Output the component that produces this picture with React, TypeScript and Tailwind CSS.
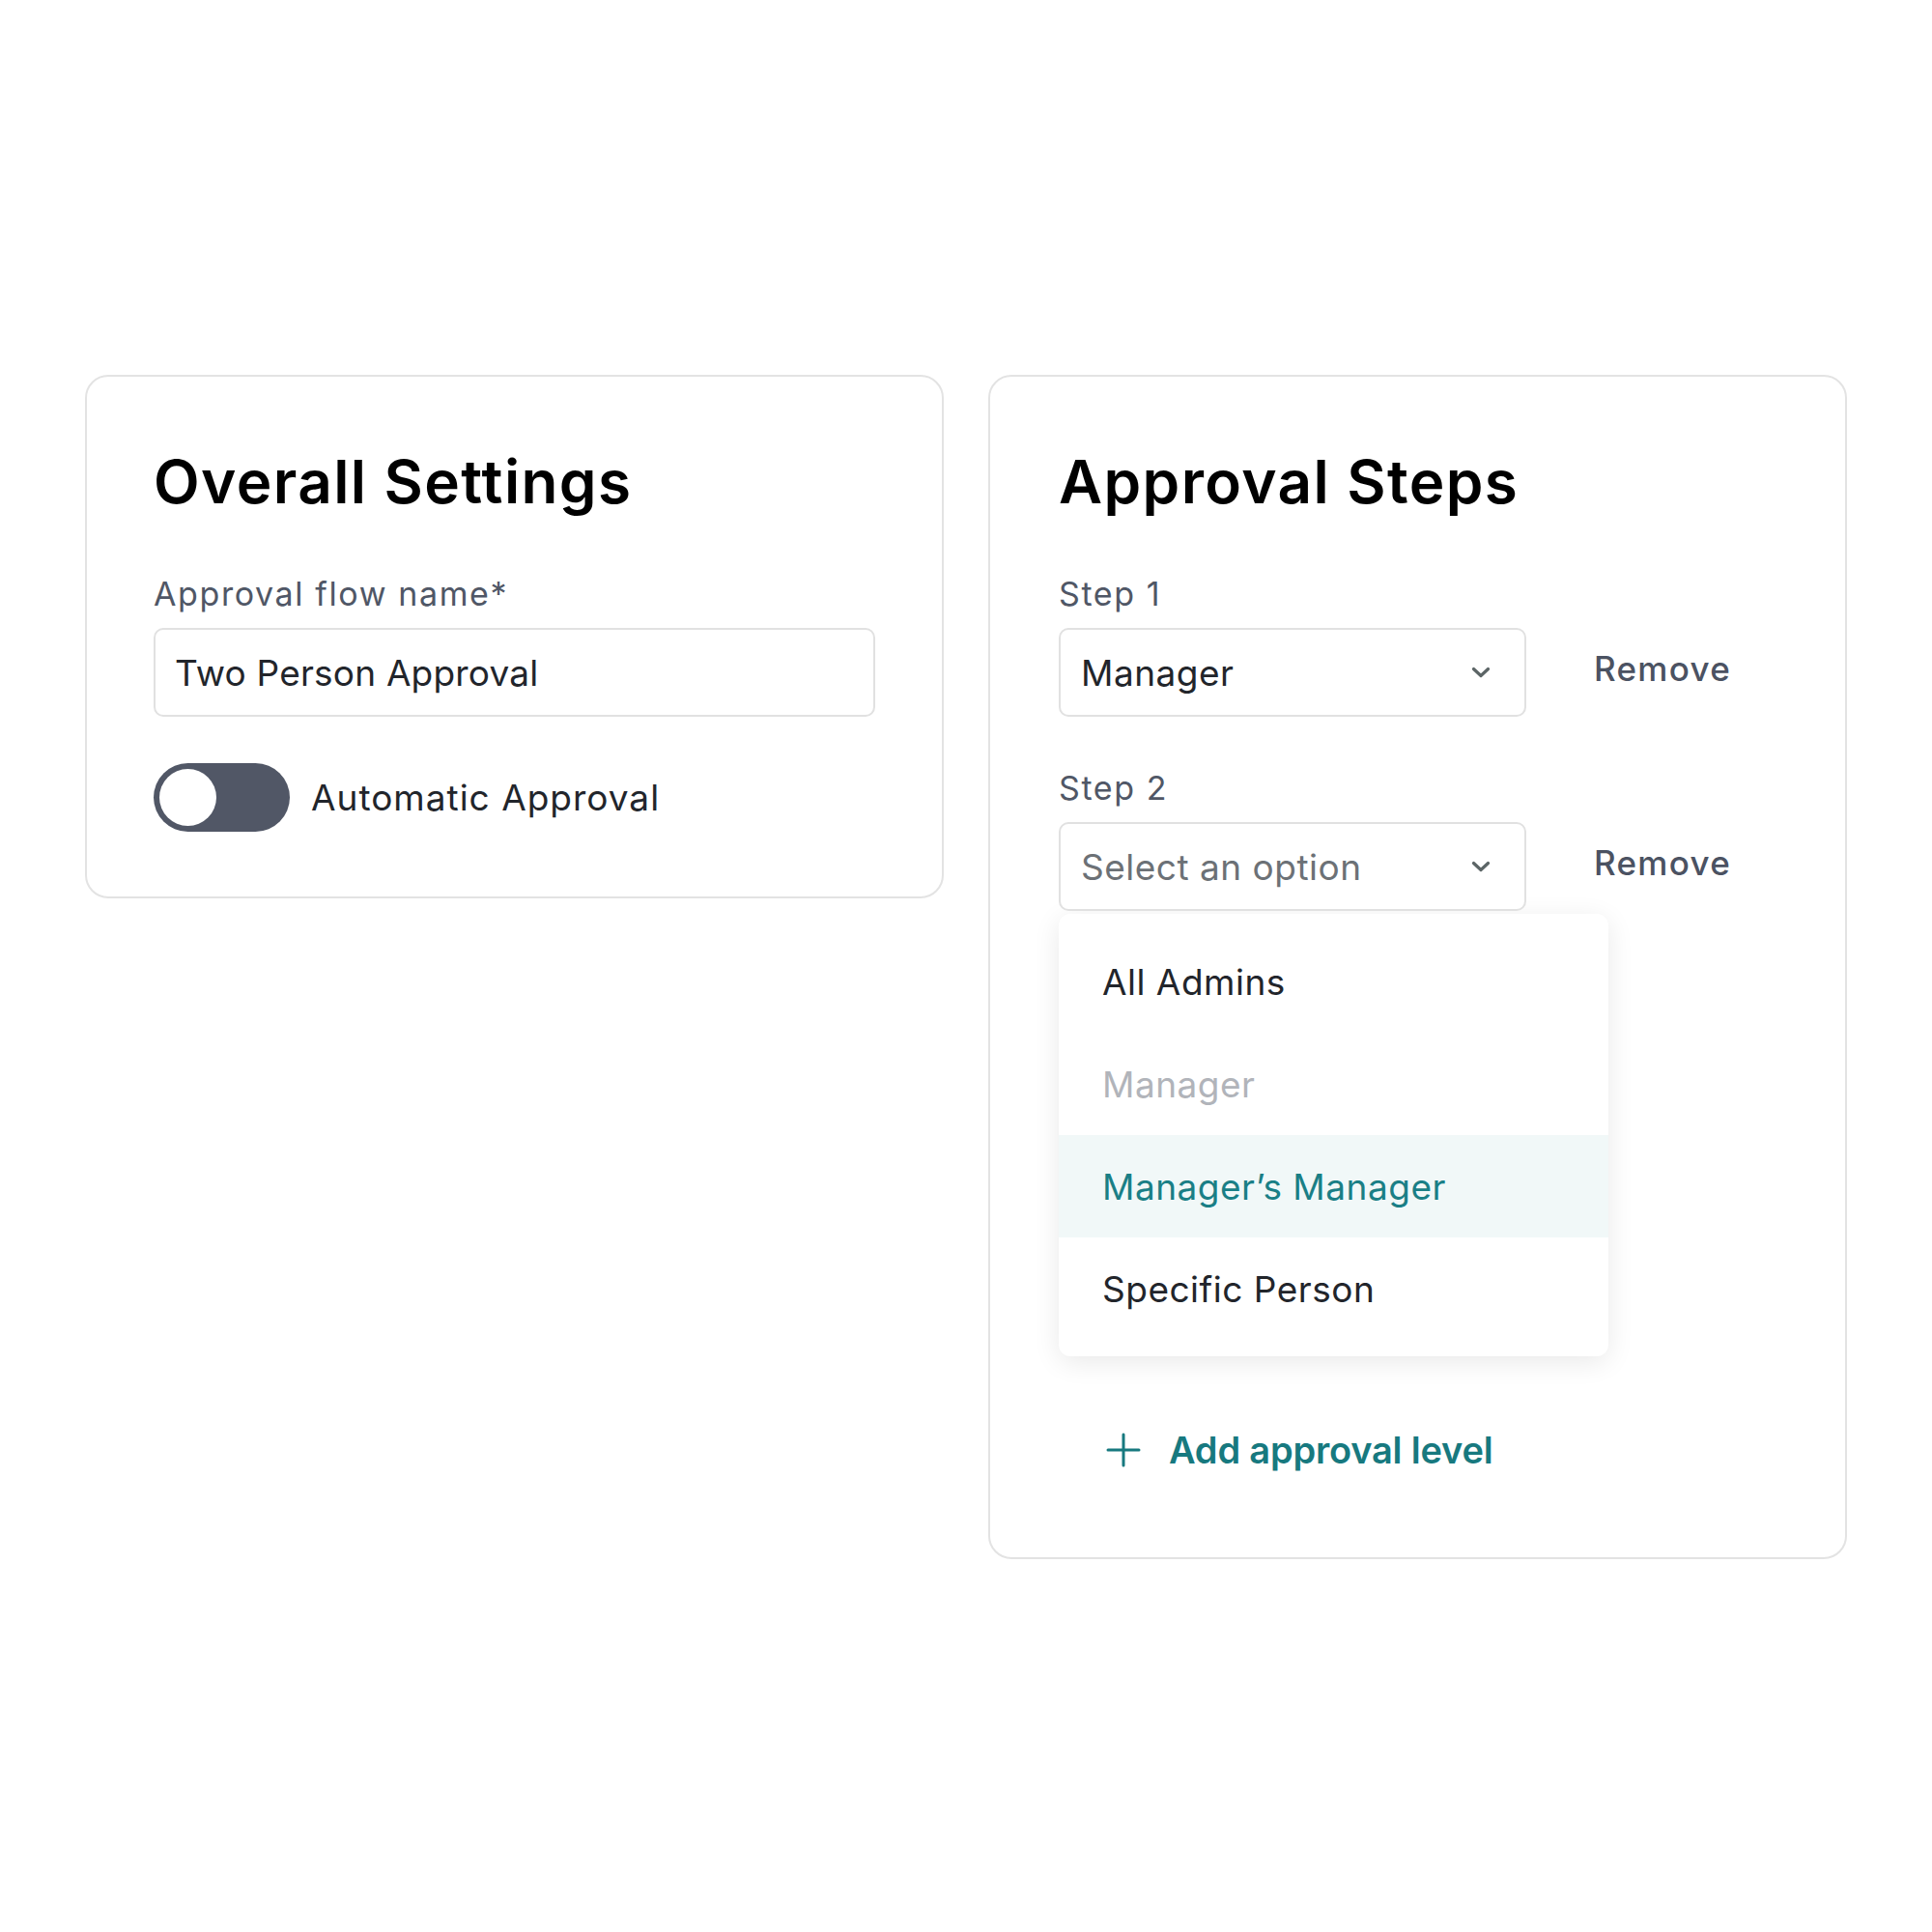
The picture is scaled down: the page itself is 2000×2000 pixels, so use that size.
import React from "react";

const font = { fontFamily: "Inter, 'Noto Sans', sans-serif" };

const options = [
  { label: "All Admins", state: "normal" },
  { label: "Manager", state: "disabled" },
  { label: "Manager’s Manager", state: "active" },
  { label: "Specific Person", state: "normal" },
];

const Chevron = () => (
  <svg width="20" height="12" viewBox="0 0 20 12" fill="none">
    <path
      d="M2.5 2.5L10 9.5L17.5 2.5"
      stroke="#5c6566"
      strokeWidth="3.2"
      strokeLinecap="round"
      strokeLinejoin="round"
    />
  </svg>
);

const Select = ({ value, placeholder }: { value?: string; placeholder?: string }) => (
  <div className="flex h-[92px] w-[484px] items-center justify-between rounded-[10px] border-2 border-[#e1e1e1] bg-white pl-[21px] pr-[35px]">
    <span
      className={
        "text-[37px] leading-none tracking-[0.5px] " +
        (value ? "text-[#22252b]" : "text-[#6c7176]")
      }
    >
      {value ?? placeholder}
    </span>
    <Chevron />
  </div>
);

const StepRow = ({ label, value, placeholder }: { label: string; value?: string; placeholder?: string }) => (
  <div className="flex flex-col">
    <span className="text-[34px] leading-none tracking-[1.6px] text-[#505766]">{label}</span>
    <div className="mt-[18px] flex items-center gap-[70px]">
      <Select value={value} placeholder={placeholder} />
      <button className="pb-[8px] text-[35px] font-medium leading-none tracking-[1.3px] text-[#4b5262]">
        Remove
      </button>
    </div>
  </div>
);

const OverallSettings = () => (
  <div className="w-[889px] rounded-[24px] border-2 border-[#e3e3e3] bg-white px-[69px] pb-[67px] pt-[78px]">
    <h2 className="text-[62px] font-semibold leading-none tracking-[1.4px] text-black">
      Overall Settings
    </h2>
    <label className="mt-[68px] block text-[34px] leading-none tracking-[1.6px] text-[#505766]">
      Approval flow name*
    </label>
    <div className="mt-[18px] flex h-[92px] items-center rounded-[10px] border-2 border-[#e1e1e1] px-[20px]">
      <span className="text-[37px] leading-none tracking-[0.2px] text-[#22252b]">Two Person Approval</span>
    </div>
    <div className="mt-[48px] flex items-center gap-[22px]">
      <div className="flex h-[71px] w-[141px] items-center rounded-full bg-[#515766] p-[6px]">
        <div className="h-[59px] w-[59px] rounded-full bg-white" />
      </div>
      <span className="text-[37px] leading-none tracking-[1px] text-[#22252b]">Automatic Approval</span>
    </div>
  </div>
);

const ApprovalSteps = () => (
  <div className="w-[889px] rounded-[24px] border-2 border-[#e3e3e3] bg-white px-[71px] pb-[92px] pt-[78px]">
    <h2 className="text-[62px] font-semibold leading-none tracking-[1.4px] text-black">
      Approval Steps
    </h2>
    <div className="mt-[68px]">
      <StepRow label="Step 1" value="Manager" />
    </div>
    <div className="mt-[57px]">
      <StepRow label="Step 2" placeholder="Select an option" />
    </div>
    <div className="mt-[3px] w-[569px] rounded-[12px] bg-white py-[17px] shadow-[0_6px_28px_rgba(0,0,0,0.09)]">
      {options.map((o) => (
        <div
          key={o.label}
          className={
            "flex h-[106px] items-center px-[45px] text-[37px] leading-none tracking-[0.5px] " +
            (o.state === "active"
              ? "bg-[#f1f8f8] text-[#1a7f86]"
              : o.state === "disabled"
              ? "text-[#b1b4ba]"
              : "text-[#22252b]")
          }
        >
          {o.label}
        </div>
      ))}
    </div>
    <button className="mt-[78px] flex items-center gap-[29px] pl-[49px]">
      <svg width="36" height="36" viewBox="0 0 36 36" fill="none">
        <path d="M18 2V34M2 18H34" stroke="#17797f" strokeWidth="3" strokeLinecap="round" />
      </svg>
      <span className="text-[38px] font-semibold leading-none tracking-[-0.2px] text-[#17797f]">
        Add approval level
      </span>
    </button>
  </div>
);

export default function App() {
  return (
    <div className="min-h-[2000px] w-[2000px] bg-white" style={font}>
      <div className="flex items-start gap-[46px] px-[88px] pt-[388px]">
        <OverallSettings />
        <ApprovalSteps />
      </div>
    </div>
  );
}
